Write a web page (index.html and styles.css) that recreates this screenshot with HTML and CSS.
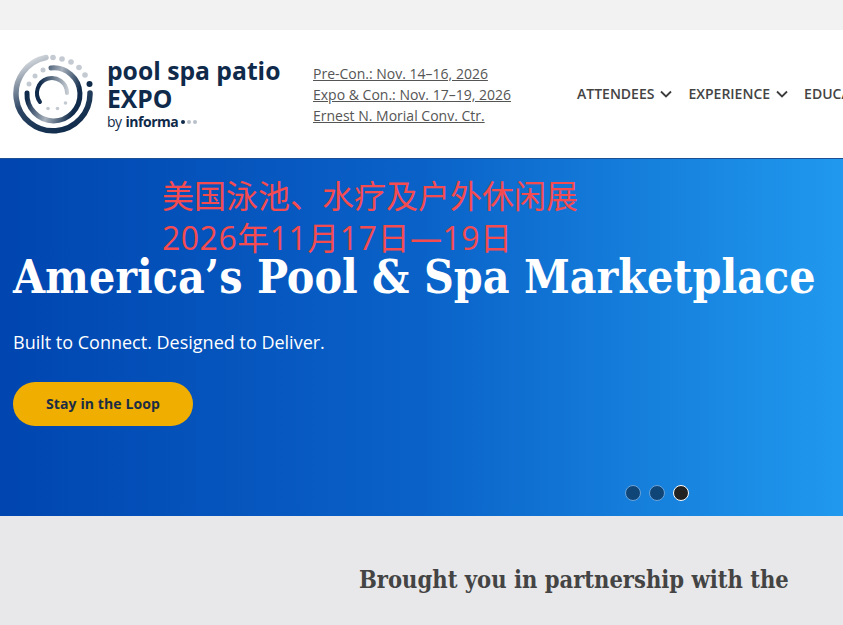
FILE: index.html
```html
<!DOCTYPE html>
<html lang="en">
<head>
    <meta charset="UTF-8">
    <title>Pool Spa Patio Expo</title>
    <link rel="stylesheet" href="styles.css">
</head>
<body>
    <div class="top-strip"></div>

    <header class="site-header">
        <a class="logo" href="#">
            <svg class="logo-mark" width="82" height="82" viewBox="13 53 82 82" fill="none">
                <defs>
                    <linearGradient id="ringOuter" gradientUnits="userSpaceOnUse" x1="75" y1="130" x2="40" y2="55">
                        <stop offset="0" stop-color="#0f2a4a"/>
                        <stop offset="0.5" stop-color="#2b4463"/>
                        <stop offset="0.8" stop-color="#8d99a8"/>
                        <stop offset="1" stop-color="#d5d9de"/>
                    </linearGradient>
                    <linearGradient id="ringMid" gradientUnits="userSpaceOnUse" x1="30" y1="90" x2="75" y2="105">
                        <stop offset="0" stop-color="#0f2a4a"/>
                        <stop offset="0.5" stop-color="#a9b2bd"/>
                        <stop offset="1" stop-color="#0f2a4a"/>
                    </linearGradient>
                    <linearGradient id="ringInner" gradientUnits="userSpaceOnUse" x1="40" y1="95" x2="68" y2="95">
                        <stop offset="0" stop-color="#0f2a4a"/>
                        <stop offset="1" stop-color="#c9ced4"/>
                    </linearGradient>
                </defs>
                <path d="M90 93 A37 37 0 1 1 46 57.5" stroke="url(#ringOuter)" stroke-width="5.5" stroke-linecap="round"/>
                <path d="M51 68 A26.5 26.5 0 1 1 27 93" stroke="url(#ringMid)" stroke-width="5" stroke-linecap="round"/>
                <path d="M40 102 A15 15 0 1 1 67 93" stroke="url(#ringInner)" stroke-width="4" stroke-linecap="round"/>
                <g fill="#c4cad1">
                    <circle cx="53" cy="57.5" r="2.8"/>
                    <circle cx="62" cy="59" r="2.8"/>
                    <circle cx="71" cy="62" r="2.8"/>
                    <circle cx="79" cy="67.5" r="2.8"/>
                    <circle cx="85" cy="75" r="2.8"/>
                    <circle cx="29" cy="84" r="2.5"/>
                    <circle cx="35" cy="76" r="2.5"/>
                    <circle cx="43" cy="70" r="2.5"/>
                    <circle cx="48" cy="108.5" r="1.8"/>
                    <circle cx="57.5" cy="108.5" r="1.8"/>
                    <circle cx="65.5" cy="103" r="1.8"/>
                </g>
                <circle cx="89.5" cy="84" r="3" fill="#0f2a4a"/>
            </svg>
            <span class="logo-text">
                <span class="logo-name">pool spa patio</span>
                <span class="logo-name">EXPO</span>
                <span class="logo-by">by <b>informa</b><i class="dot dark"></i><i class="dot"></i><i class="dot"></i></span>
            </span>
        </a>

        <div class="event-dates">
            <a href="#">Pre-Con.: Nov. 14–16, 2026</a>
            <a href="#">Expo &amp; Con.: Nov. 17–19, 2026</a>
            <a href="#">Ernest N. Morial Conv. Ctr.</a>
        </div>

        <nav class="main-nav">
            <a href="#">ATTENDEES <svg width="12" height="8" viewBox="0 0 12 8" fill="none"><path d="M1 1.5l5 5 5-5" stroke="#3c3c3c" stroke-width="1.8"/></svg></a>
            <a href="#">EXPERIENCE <svg width="12" height="8" viewBox="0 0 12 8" fill="none"><path d="M1 1.5l5 5 5-5" stroke="#3c3c3c" stroke-width="1.8"/></svg></a>
            <a href="#">EDUCATION</a>
        </nav>
    </header>

    <section class="hero">
        <div class="cn-notice">
            <p>美国泳池、水疗及户外休闲展</p>
            <p class="cn-date">2026年11月17日—19日</p>
        </div>
        <h1>America’s Pool &amp; Spa Marketplace</h1>
        <p class="hero-sub">Built to Connect. Designed to Deliver.</p>
        <a class="hero-btn" href="#">Stay in the Loop</a>
        <div class="slider-dots">
            <span></span>
            <span></span>
            <span class="active"></span>
        </div>
    </section>

    <section class="partners">
        <h2>Brought you in partnership with the</h2>
    </section>
</body>
</html>
```

FILE: styles.css
```css
html, body {
    height: 100%;
    margin: 0;
    overflow: hidden;
}

body {
    display: flex;
    flex-direction: column;
    font-family: "Open Sans", Arial, sans-serif;
    background-color: #e8e8ea;
}

a {
    color: inherit;
}

.top-strip {
    height: 30px;
    background-color: #f2f2f2;
}

.site-header {
    display: flex;
    align-items: center;
    height: 128px;
    padding-left: 13px;
    overflow: hidden;
    background-color: white;
    white-space: nowrap;
}

.logo {
    display: flex;
    align-items: center;
    gap: 12px;
    width: 300px;
    flex: none;
    text-decoration: none;
    color: #0f2a4a;
}

.logo-mark {
    flex: none;
}

.logo-text {
    display: flex;
    flex-direction: column;
}

.logo-name {
    font-size: 24.7px;
    font-weight: 700;
    line-height: 28px;
}

.logo-by {
    display: flex;
    align-items: center;
    font-size: 14px;
    line-height: 18px;
    letter-spacing: -0.5px;
}

.logo-by b {
    margin-left: 4px;
    font-weight: 700;
}

.dot {
    width: 4px;
    height: 4px;
    margin-left: 2px;
    border-radius: 50%;
    background-color: #b9c0c9;
}

.dot.dark {
    margin-left: 3px;
    background-color: #0f2a4a;
}

.event-dates {
    display: flex;
    flex-direction: column;
    width: 264px;
    flex: none;
    font-size: 14px;
    line-height: 21px;
    color: #555;
}

.main-nav {
    display: flex;
    gap: 16px;
    margin-top: -2px;
    font-size: 14px;
    font-weight: 600;
    color: #444;
}

.main-nav a {
    display: flex;
    align-items: center;
    gap: 6px;
    text-decoration: none;
}

.main-nav svg {
    margin-top: 1px;
}

.hero {
    position: relative;
    height: 358px;
    flex: none;
    padding: 87px 0 0 13px;
    box-sizing: border-box;
    border-top: 1px solid #1d4f94;
    background: linear-gradient(90deg, #0045b0 0%, #0a62c8 50%, #2099ee 100%);
    color: white;
}

.cn-notice {
    position: absolute;
    left: 162px;
    top: 16px;
    color: #f44b50;
    font-family: "Open Sans", "Noto Sans CJK SC", sans-serif;
    font-size: 32px;
    line-height: 42px;
}

.cn-notice p {
    margin: 0;
}

.cn-notice .cn-date {
    letter-spacing: 0.5px;
}

.hero h1 {
    margin: 0;
    font-family: "DejaVu Serif Condensed", "DejaVu Serif", serif;
    font-size: 46px;
    font-weight: 700;
    line-height: 62px;
    white-space: nowrap;
}

.hero-sub {
    margin: 21px 0 0;
    font-size: 18px;
    line-height: 26px;
}

.hero-btn {
    display: flex;
    align-items: center;
    justify-content: center;
    width: 180px;
    height: 44px;
    margin-top: 27px;
    padding-bottom: 1px;
    box-sizing: border-box;
    border-radius: 22px;
    background-color: #f0ae00;
    color: #1b2d45;
    font-size: 14px;
    font-weight: 700;
    letter-spacing: 0.1px;
    text-decoration: none;
}

.slider-dots {
    position: absolute;
    left: 625px;
    top: 326px;
    display: flex;
    gap: 8px;
}

.slider-dots span {
    width: 14px;
    height: 14px;
    border: 1px solid #6ba3d8;
    border-radius: 50%;
    background-color: #104578;
}

.slider-dots .active {
    border-color: white;
    background-color: #222;
}

.partners {
    flex: 1;
    padding-top: 48px;
    padding-left: 359px;
}

.partners h2 {
    margin: 0;
    font-family: "DejaVu Serif Condensed", "DejaVu Serif", serif;
    font-size: 23.5px;
    font-weight: 700;
    line-height: 32px;
    color: #444;
    white-space: nowrap;
}
```
